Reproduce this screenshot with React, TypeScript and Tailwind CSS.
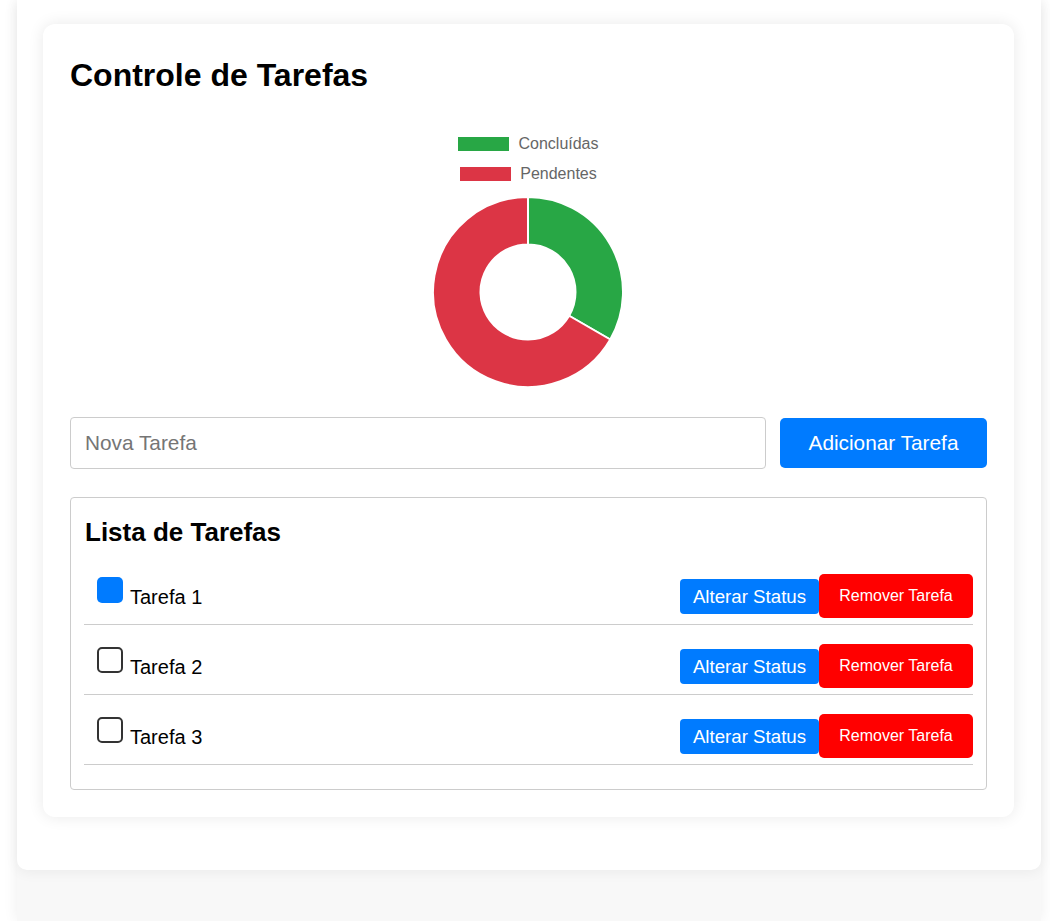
import React from "react";

const tasks = [
  { name: "Tarefa 1", done: true },
  { name: "Tarefa 2", done: false },
  { name: "Tarefa 3", done: false },
];

function Donut() {
  return (
    <svg width="194" height="194" viewBox="-1 -1 194 194" className="block">
      <path
        d="M96 1 A95 95 0 0 1 178.27 143.5 L137.14 119.75 A47.5 47.5 0 0 0 96 48.5 Z"
        fill="#28a745"
        stroke="#ffffff"
        strokeWidth="2"
        strokeLinejoin="round"
      />
      <path
        d="M178.27 143.5 A95 95 0 1 1 96 1 L96 48.5 A47.5 47.5 0 1 0 137.14 119.75 Z"
        fill="#dc3545"
        stroke="#ffffff"
        strokeWidth="2"
        strokeLinejoin="round"
      />
    </svg>
  );
}

export default function App() {
  return (
    <div
      className="min-h-screen bg-white"
      style={{ fontFamily: '"Liberation Sans", Arial, sans-serif' }}
    >
      <div className="ml-[17px] w-[1024px] min-h-[921px] bg-[#f8f8f8] shadow-[0_0_14px_rgba(0,0,0,0.07)]">
        <div className="bg-white rounded-b-[10px] shadow-[0_2px_14px_rgba(0,0,0,0.06)] pt-[24px] pb-[53px] pl-[26px]">
          <div className="w-[971px] bg-white rounded-[12px] shadow-[0_0_16px_rgba(0,0,0,0.09)] px-[27px] pt-[33px] pb-[27px]">
            <h1 className="text-[32px] leading-[37px] font-bold text-black">
              Controle de Tarefas
            </h1>

            <div className="mt-[35px] flex flex-col items-center">
              <div className="flex h-[30px] items-center gap-[9px]">
                <span className="block w-[51px] h-[14px] bg-[#28a745]" />
                <span className="text-[16px] text-[#666666]">Concluídas</span>
              </div>
              <div className="flex h-[30px] items-center gap-[9px]">
                <span className="block w-[51px] h-[14px] bg-[#dc3545]" />
                <span className="text-[16px] text-[#666666]">Pendentes</span>
              </div>
              <div className="mt-[6px] ml-[-1px]">
                <Donut />
              </div>
            </div>

            <div className="mt-[28px] flex items-center">
              <input
                type="text"
                placeholder="Nova Tarefa"
                className="flex-1 h-[52px] border border-[#cccccc] rounded-[4px] pl-[14px] text-[20.8px] text-black placeholder:text-[#757575] outline-none"
              />
              <button className="ml-[14px] h-[50px] w-[207px] bg-[#007bff] text-white text-[20.8px] rounded-[5px]">
                Adicionar Tarefa
              </button>
            </div>

            <div className="mt-[28px] border border-[#cccccc] rounded-[4px] px-[13px] pt-[14px] pb-[24px]">
              <h2 className="text-[26px] leading-[30px] font-bold text-black mt-[5px] ml-[1px]">
                Lista de Tarefas
              </h2>
              <ul className="mt-[8px]">
                {tasks.map((t) => (
                  <li
                    key={t.name}
                    className="flex items-start justify-between border-b border-[#cccccc] pl-[13px] pt-[19px] pb-[6px]"
                  >
                    <div className="flex items-start">
                      <span
                        className={
                          t.done
                            ? "mt-[3px] block w-[26px] h-[26px] rounded-[5px] bg-[#007bff]"
                            : "mt-[3px] block w-[26px] h-[26px] rounded-[5px] border-2 border-[#333333] bg-white"
                        }
                      />
                      <span className="ml-[7px] mt-[12px] text-[20px] leading-[23px] text-black">
                        {t.name}
                      </span>
                    </div>
                    <div className="flex items-center h-[44px]">
                      <button className="h-[35px] w-[139px] bg-[#007bff] text-white text-[18.7px] leading-[21px] rounded-[4px]">
                        Alterar Status
                      </button>
                      <button className="h-[44px] w-[154px] bg-[#ff0000] text-white text-[16px] rounded-[5px]">
                        Remover Tarefa
                      </button>
                    </div>
                  </li>
                ))}
              </ul>
            </div>
          </div>
        </div>
      </div>
    </div>
  );
}
